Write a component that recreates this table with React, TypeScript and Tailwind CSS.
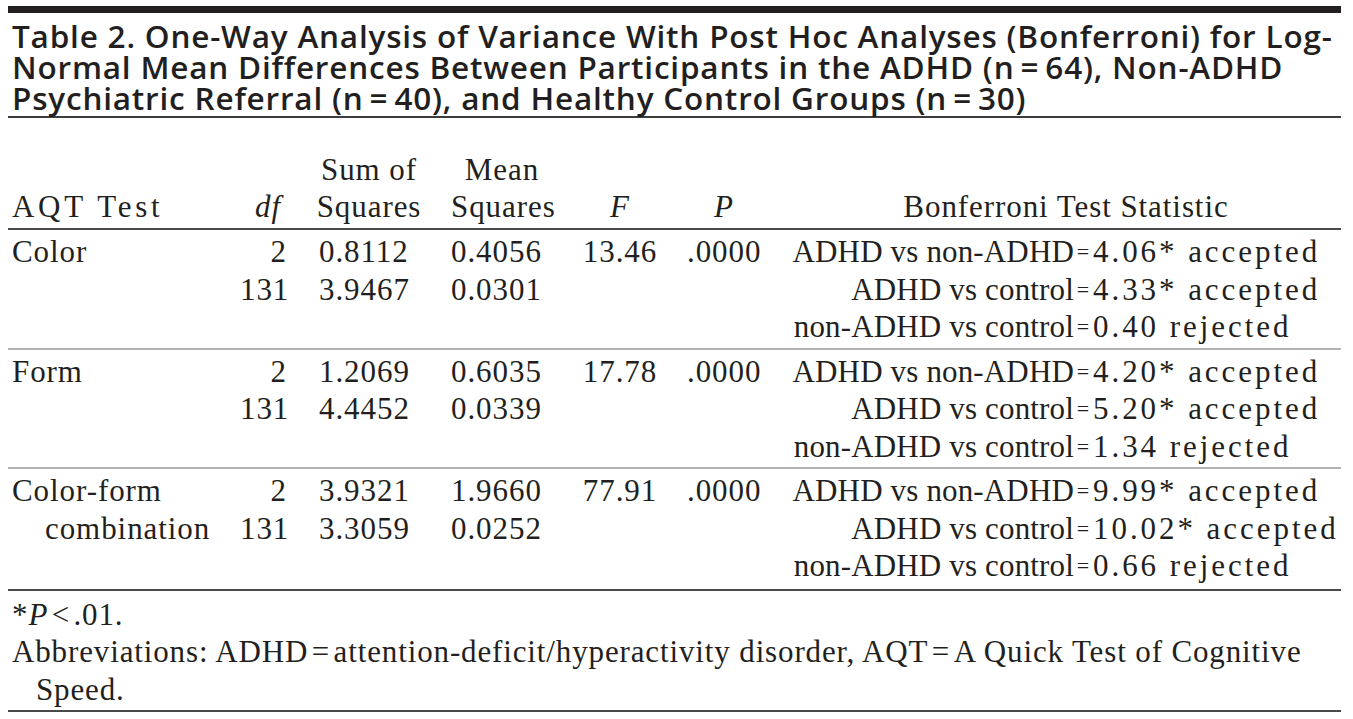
const EQ = '\u200a=\u200a';
const TEQ = '\u2009=\u2009';

type Row = {
  test?: string;
  indent?: boolean;
  df?: string;
  ss?: string;
  ms?: string;
  f?: string;
  p?: string;
  left: string;
  right: string;
};

const groups: Row[][] = [
  [
    { test: 'Color', df: '2', ss: '0.8112', ms: '0.4056', f: '13.46', p: '.0000', left: 'ADHD vs non-ADHD', right: '4.06* accepted' },
    { df: '131', ss: '3.9467', ms: '0.0301', left: 'ADHD vs control', right: '4.33* accepted' },
    { left: 'non-ADHD vs control', right: '0.40 rejected' },
  ],
  [
    { test: 'Form', df: '2', ss: '1.2069', ms: '0.6035', f: '17.78', p: '.0000', left: 'ADHD vs non-ADHD', right: '4.20* accepted' },
    { df: '131', ss: '4.4452', ms: '0.0339', left: 'ADHD vs control', right: '5.20* accepted' },
    { left: 'non-ADHD vs control', right: '1.34 rejected' },
  ],
  [
    { test: 'Color-form', df: '2', ss: '3.9321', ms: '1.9660', f: '77.91', p: '.0000', left: 'ADHD vs non-ADHD', right: '9.99* accepted' },
    { test: 'combination', indent: true, df: '131', ss: '3.3059', ms: '0.0252', left: 'ADHD vs control', right: '10.02* accepted' },
    { left: 'non-ADHD vs control', right: '0.66 rejected' },
  ],
];

const cols = 'grid grid-cols-[228px_47px_164px_102px_134px_74px_313px_19px_1fr]';

function DataRow({ row }: { row: Row }) {
  return (
    <div className={`${cols} leading-[37.5px]`}>
      <div className={row.indent ? 'pl-[33px] whitespace-nowrap' : 'whitespace-nowrap'}>{row.test}</div>
      <div className="text-right">{row.df}</div>
      <div className="pl-[32px]">{row.ss}</div>
      <div>{row.ms}</div>
      <div className="text-center">{row.f}</div>
      <div className="text-center">{row.p}</div>
      <div className="text-right whitespace-nowrap tracking-[0.005em]">{row.left}</div>
      <div className="text-center text-[22px]">=</div>
      <div className="whitespace-nowrap tracking-[0.095em]">{row.right}</div>
    </div>
  );
}

export default function App() {
  return (
    <div className="w-[1353px] h-[719px] overflow-hidden bg-white text-[#231f20]">
      <div className="pt-[6px]">
        {/* heavy top rule */}
        <div className="ml-[8px] mr-[12px] h-[7px] bg-[#231f20]"></div>

        {/* caption */}
        <h1 className="pl-[12px] pt-[7px] pb-[3px] font-['Open_Sans',sans-serif] font-semibold text-[31.5px] leading-[31px] tracking-[0.8px] whitespace-nowrap">
          Table 2. One-Way Analysis of Variance With Post Hoc Analyses (Bonferroni) for Log-
          <br />
          Normal Mean Differences Between Participants in the ADHD (n{TEQ}64), Non-ADHD
          <br />
          Psychiatric Referral (n{TEQ}40), and Healthy Control Groups (n{TEQ}30)
        </h1>
        <div className="ml-[8px] mr-[12px] h-[2px] bg-[#3d3d3d]"></div>

        <div className="font-['Liberation_Serif',serif] text-[31px] tracking-[0.03em]">
          {/* column heads */}
          <div className={`${cols} pl-[12px] pt-[33px] pb-[3px] leading-[37px] items-end`}>
            <div className="tracking-[0.12em]">AQT Test</div>
            <div className="text-right italic pr-[6px]">df</div>
            <div className="text-center">Sum of<br />Squares</div>
            <div className="text-center">Mean<br />Squares</div>
            <div className="text-center italic">F</div>
            <div className="text-center italic">P</div>
            <div className="col-span-3 text-center pl-[32px] pr-[14px]">Bonferroni Test Statistic</div>
          </div>
          <div className="ml-[8px] mr-[12px] h-[2px] bg-[#4a4a4a]"></div>

          {groups.map((g, gi) => (
            <div key={gi}>
              <div className={gi === groups.length - 1 ? 'pl-[12px] pt-[3px] pb-[4px]' : 'pl-[12px] pt-[3px] pb-[2px]'}>
                {g.map((r, ri) => (
                  <DataRow key={ri} row={r} />
                ))}
              </div>
              <div className={gi === groups.length - 1 ? 'ml-[8px] mr-[12px] h-[2px] bg-[#4a4a4a]' : 'ml-[8px] mr-[12px] h-[2px] bg-[#b3b3b3]'}></div>
            </div>
          ))}

          {/* footnotes */}
          <div className="pl-[12px] pt-[5px] pb-[2px] leading-[37.5px] tracking-[0.028em]">
            <div>
              *<span className="italic">P</span>{'\u200a<\u200a'}.01.
            </div>
            <div className="whitespace-nowrap">
              Abbreviations: ADHD{EQ}attention-deficit/hyperactivity disorder, AQT{EQ}A Quick Test of Cognitive
            </div>
            <div className="pl-[24px]">Speed.</div>
          </div>
          <div className="ml-[8px] mr-[12px] h-[2px] bg-[#4a4a4a]"></div>
        </div>
      </div>
    </div>
  );
}
